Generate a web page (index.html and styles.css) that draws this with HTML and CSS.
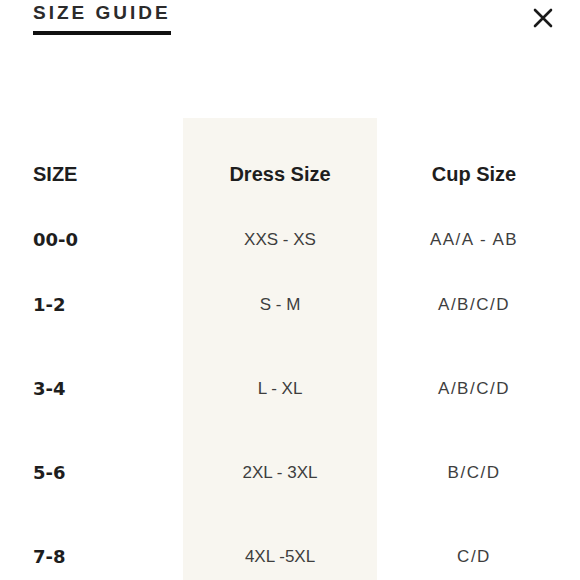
FILE: index.html
```html
<!DOCTYPE html>
<html lang="en">
<head>
<meta charset="utf-8">
<title>Size Guide</title>
<link rel="stylesheet" href="styles.css">
</head>
<body>
<div class="guide">
  <header class="top">
    <div class="title">
      <h1>SIZE GUIDE</h1>
      <div class="bar"></div>
    </div>
    <button class="close" aria-label="Close">
      <svg width="20" height="20" viewBox="0 0 20 20"><path d="M2 2 L18 18 M18 2 L2 18" stroke="#1a1a1a" stroke-width="2.6" stroke-linecap="round" fill="none"/></svg>
    </button>
  </header>
  <div class="table">
    <div class="col col-size">
      <div class="cell head">SIZE</div>
      <div class="cell r1">00-0</div>
      <div class="cell r2">1-2</div>
      <div class="cell r3">3-4</div>
      <div class="cell r4">5-6</div>
      <div class="cell r5">7-8</div>
    </div>
    <div class="col col-dress">
      <div class="cell head">Dress Size</div>
      <div class="cell r1">XXS - XS</div>
      <div class="cell r2">S - M</div>
      <div class="cell r3">L - XL</div>
      <div class="cell r4">2XL - 3XL</div>
      <div class="cell r5">4XL -5XL</div>
    </div>
    <div class="col col-cup">
      <div class="cell head">Cup Size</div>
      <div class="cell r1">AA/A - AB</div>
      <div class="cell r2">A/B/C/D</div>
      <div class="cell r3">A/B/C/D</div>
      <div class="cell r4">B/C/D</div>
      <div class="cell r5">C/D</div>
    </div>
  </div>
</div>
</body>
</html>
```

FILE: styles.css
```css
html, body {
  margin: 0;
  padding: 0;
  background: #ffffff;
}
body {
  font-family: "Liberation Sans", Arial, sans-serif;
  color: #3e3e3e;
}
.guide {
  width: 580px;
  height: 580px;
  overflow: hidden;
}
.top {
  display: flex;
  justify-content: space-between;
  align-items: flex-start;
  padding: 0 27px 0 33px;
  height: 118px;
}
.title h1 {
  margin: 0;
  padding-top: 2px;
  font-size: 19px;
  line-height: 22px;
  font-weight: 700;
  letter-spacing: 3px;
  color: #2b2b2b;
}
.bar {
  margin-top: 7px;
  width: 138px;
  height: 4px;
  background: #111111;
}
.close {
  margin-top: 8px;
  padding: 0;
  border: 0;
  background: none;
  width: 20px;
  height: 20px;
}
.close svg { display: block; }
.table {
  display: grid;
  grid-template-columns: 150px 194px 194px;
  padding-left: 33px;
}
.col {
  display: flex;
  flex-direction: column;
}
.col-dress {
  background: #f8f6f0;
  align-items: center;
}
.col-cup {
  align-items: center;
  letter-spacing: 1.5px;
}
.cell {
  font-size: 17px;
  height: 65px;
  display: flex;
  align-items: center;
}
.col-size .cell {
  font-family: "DejaVu Sans", sans-serif;
  font-weight: 700;
  font-size: 18px;
  color: #1e1e1e;
}
.col .head {
  font-family: "Liberation Sans", Arial, sans-serif;
  height: 56px;
  margin-top: 28px;
  font-weight: 700;
  font-size: 20px;
  letter-spacing: 0;
  color: #1e1e1e;
}
.r1 { margin-top: 5px; }
.r3, .r4, .r5 { margin-top: 19px; }
```
